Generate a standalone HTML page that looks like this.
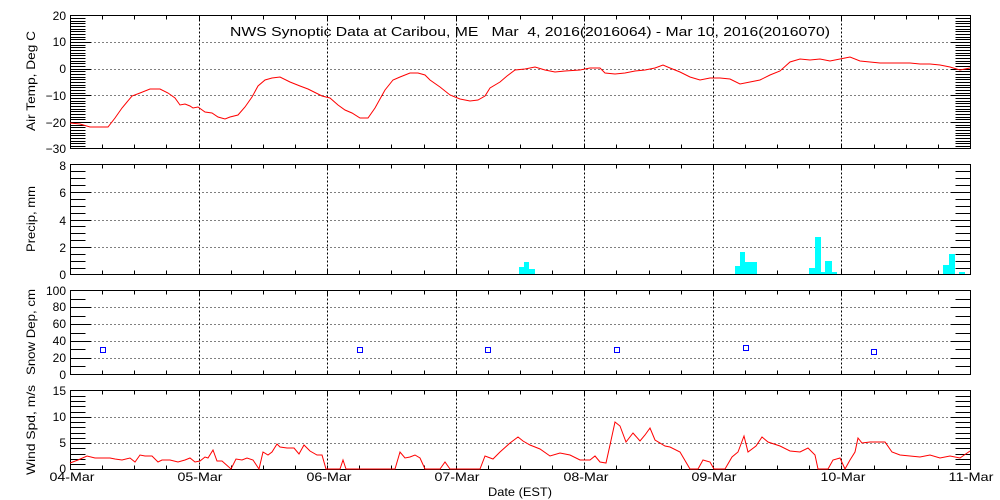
<!DOCTYPE html>
<html><head><meta charset="utf-8"><style>
html,body{margin:0;padding:0;background:#fff;width:1000px;height:500px;overflow:hidden}
svg{display:block}
text{font-family:"Liberation Sans",sans-serif;font-size:12px;fill:#000}
</style></head><body>
<svg id="s" width="1000" height="500" viewBox="0 0 1000 500" xmlns="http://www.w3.org/2000/svg">
<g id="grid"></g>
<text x="230" y="36" style="font-size:13px" textLength="600" lengthAdjust="spacingAndGlyphs" xml:space="preserve">NWS Synoptic Data at Caribou, ME   Mar  4, 2016(2016064) - Mar 10, 2016(2016070)</text>
<g text-anchor="end" style="font-size:13px">
<text x="66" y="20">20</text><text x="66" y="46">10</text><text x="66" y="73">0</text><text x="66" y="100">−10</text><text x="66" y="127">−20</text><text x="66" y="153">−30</text>
<text x="66" y="170">8</text><text x="66" y="197">6</text><text x="66" y="225">4</text><text x="66" y="252">2</text><text x="66" y="279">0</text>
<text x="66" y="295">100</text><text x="66" y="311">80</text><text x="66" y="328">60</text><text x="66" y="345">40</text><text x="66" y="362">20</text><text x="66" y="379">0</text>
<text x="66" y="395">15</text><text x="66" y="421">10</text><text x="66" y="447">5</text><text x="66" y="473">0</text>
</g>
<g text-anchor="middle" style="font-size:13px">
<text transform="translate(35,81) rotate(-90)" textLength="100" lengthAdjust="spacingAndGlyphs">Air Temp, Deg C</text>
<text transform="translate(35,219) rotate(-90)" textLength="66" lengthAdjust="spacingAndGlyphs">Precip, mm</text>
<text transform="translate(35,332) rotate(-90)" textLength="86" lengthAdjust="spacingAndGlyphs">Snow Dep, cm</text>
<text transform="translate(35,430) rotate(-90)" textLength="90" lengthAdjust="spacingAndGlyphs">Wind Spd, m/s</text>
<text x="72" y="481" textLength="45" lengthAdjust="spacingAndGlyphs">04-Mar</text><text x="200" y="481" textLength="45" lengthAdjust="spacingAndGlyphs">05-Mar</text><text x="329" y="481" textLength="45" lengthAdjust="spacingAndGlyphs">06-Mar</text><text x="457" y="481" textLength="45" lengthAdjust="spacingAndGlyphs">07-Mar</text><text x="586" y="481" textLength="45" lengthAdjust="spacingAndGlyphs">08-Mar</text><text x="714" y="481" textLength="45" lengthAdjust="spacingAndGlyphs">09-Mar</text><text x="843" y="481" textLength="45" lengthAdjust="spacingAndGlyphs">10-Mar</text><text x="971" y="481" textLength="45" lengthAdjust="spacingAndGlyphs">11-Mar</text>
<text x="520" y="496" textLength="64" lengthAdjust="spacingAndGlyphs">Date (EST)</text>
</g>
<polyline fill="none" stroke="#f00" stroke-width="1" points="70,123 80,124 90,127 100,127 108,127 115,118 122,108 132,96 140,93 150,89 160,89 168,93 175,98 180,105 185,104 190,106 193,108 198,107 205,112 212,113 218,117 225,119 230,117 238,115 245,107 252,97 258,86 265,80 272,78 280,77 290,82 300,86 308,89 316,93 322,96 330,98 338,105 345,110 352,113 360,118 368,118 375,108 385,90 393,80 400,77 410,73 418,73 425,75 430,80 440,87 450,95 460,99 470,101 478,100 485,96 490,88 500,82 507,76 515,70 525,69 535,67 545,70 555,72 565,71 580,70 590,68 600,68 605,73 615,74 625,73 635,71 645,70 655,68 663,65 670,68 680,72 690,77 700,80 710,78 720,78 730,79 740,84 750,82 760,80 770,75 780,71 790,62 800,59 810,60 820,59 830,61 840,59 850,57 860,61 870,62 880,63 900,63 910,63 920,64 930,64 940,65 950,67 960,70 970,68"/>
<g fill="#0ff">
<rect x="519" y="267" width="5" height="7"/><rect x="524" y="262" width="5" height="12"/><rect x="529" y="269" width="6" height="5"/>
<rect x="735" y="266" width="5" height="8"/><rect x="740" y="252" width="5" height="22"/><rect x="745" y="262" width="12" height="12"/>
<rect x="809" y="268" width="6" height="6"/><rect x="815" y="237" width="6" height="37"/><rect x="821" y="272" width="4" height="2"/><rect x="825" y="261" width="7" height="13"/><rect x="832" y="272" width="5" height="2"/>
<rect x="943" y="265" width="6" height="9"/><rect x="949" y="254" width="6" height="20"/><rect x="959" y="272" width="6" height="2"/>
</g>
<g fill="none" stroke="#00f" stroke-width="1">
<rect x="100.5" y="347.5" width="5" height="5"/><rect x="357.5" y="347.5" width="5" height="5"/><rect x="485.5" y="347.5" width="5" height="5"/><rect x="614.5" y="347.5" width="5" height="5"/><rect x="743.5" y="345.5" width="5" height="5"/><rect x="871.5" y="349.5" width="5" height="5"/>
</g>
<polyline fill="none" stroke="#f00" stroke-width="1" points="70,463 78,460 87,456 95,458 110,458 115,459 122,460 130,458 135,462 140,455 145,456 152,456 158,462 162,460 170,460 178,462 185,460 190,458 195,462 200,461 205,457 208,458 213,450 217,461 222,461 231,469 236,459 242,460 247,458 253,460 259,469 263,452 268,455 272,452 277,444 280,447 287,448 294,448 299,454 304,445 310,451 317,455 322,455 326,469 340,469 343,460 346,469 395,469 400,452 405,458 410,457 415,455 420,458 425,469 440,469 445,462 450,469 480,469 485,456 493,459 500,452 510,443 518,437 523,441 530,445 540,449 550,456 560,453 570,455 580,460 590,460 595,456 600,462 606,463 610,445 615,422 620,426 626,442 633,433 640,441 645,435 650,428 655,440 665,446 670,447 680,452 690,469 698,469 703,460 710,462 714,469 725,469 732,457 738,452 744,436 748,452 756,446 762,437 768,442 780,446 790,451 800,452 808,448 815,455 818,469 828,469 833,460 840,458 845,469 850,460 855,452 858,438 862,443 870,442 880,442 885,442 892,452 900,455 910,456 920,457 930,455 940,458 950,456 960,458 970,451"/>
</svg>
<script>
(function(){
var g=document.getElementById('grid'),h='';
function L(x1,y1,x2,y2,d){h+='<line x1="'+x1+'" y1="'+y1+'" x2="'+x2+'" y2="'+y2+'" stroke="#000" stroke-width="1"'+(d?' stroke-dasharray="'+d+'"':'')+'/>';}
var X0=70.5,X1=970.5,dw=900/7;
var P=[[15.5,148.5,50,10],[164.5,274.5,16,4],[290.5,374.5,10,2],[390.5,469.5,15,5]];
P.forEach(function(p){
 var t=p[0],b=p[1],n=p[2],m=p[3],s=(b-t)/n;
 for(var i=1;i<n;i++){var y=Math.round(b-i*s)+0.5;var maj=i%m==0;
  if(maj)L(X0,y,X1,y,'1,3');
  L(X0,y,X0+(maj?20:15),y);L(X1,y,X1-(maj?20:15),y);}
 for(var k=1;k<7;k++){var x=Math.round(70+k*dw)+0.5;L(x,t,x,b,'2,2');}
 for(var k=1;k<28;k++){var x=Math.round(70+k*dw/4)+0.5;L(x,t,x,t+4);L(x,b,x,b-4);}
 h+='<rect x="'+X0+'" y="'+t+'" width="900" height="'+(b-t)+'" fill="none" stroke="#000" stroke-width="1"/>';
});
g.innerHTML=h;
})();
</script>
</body></html>
